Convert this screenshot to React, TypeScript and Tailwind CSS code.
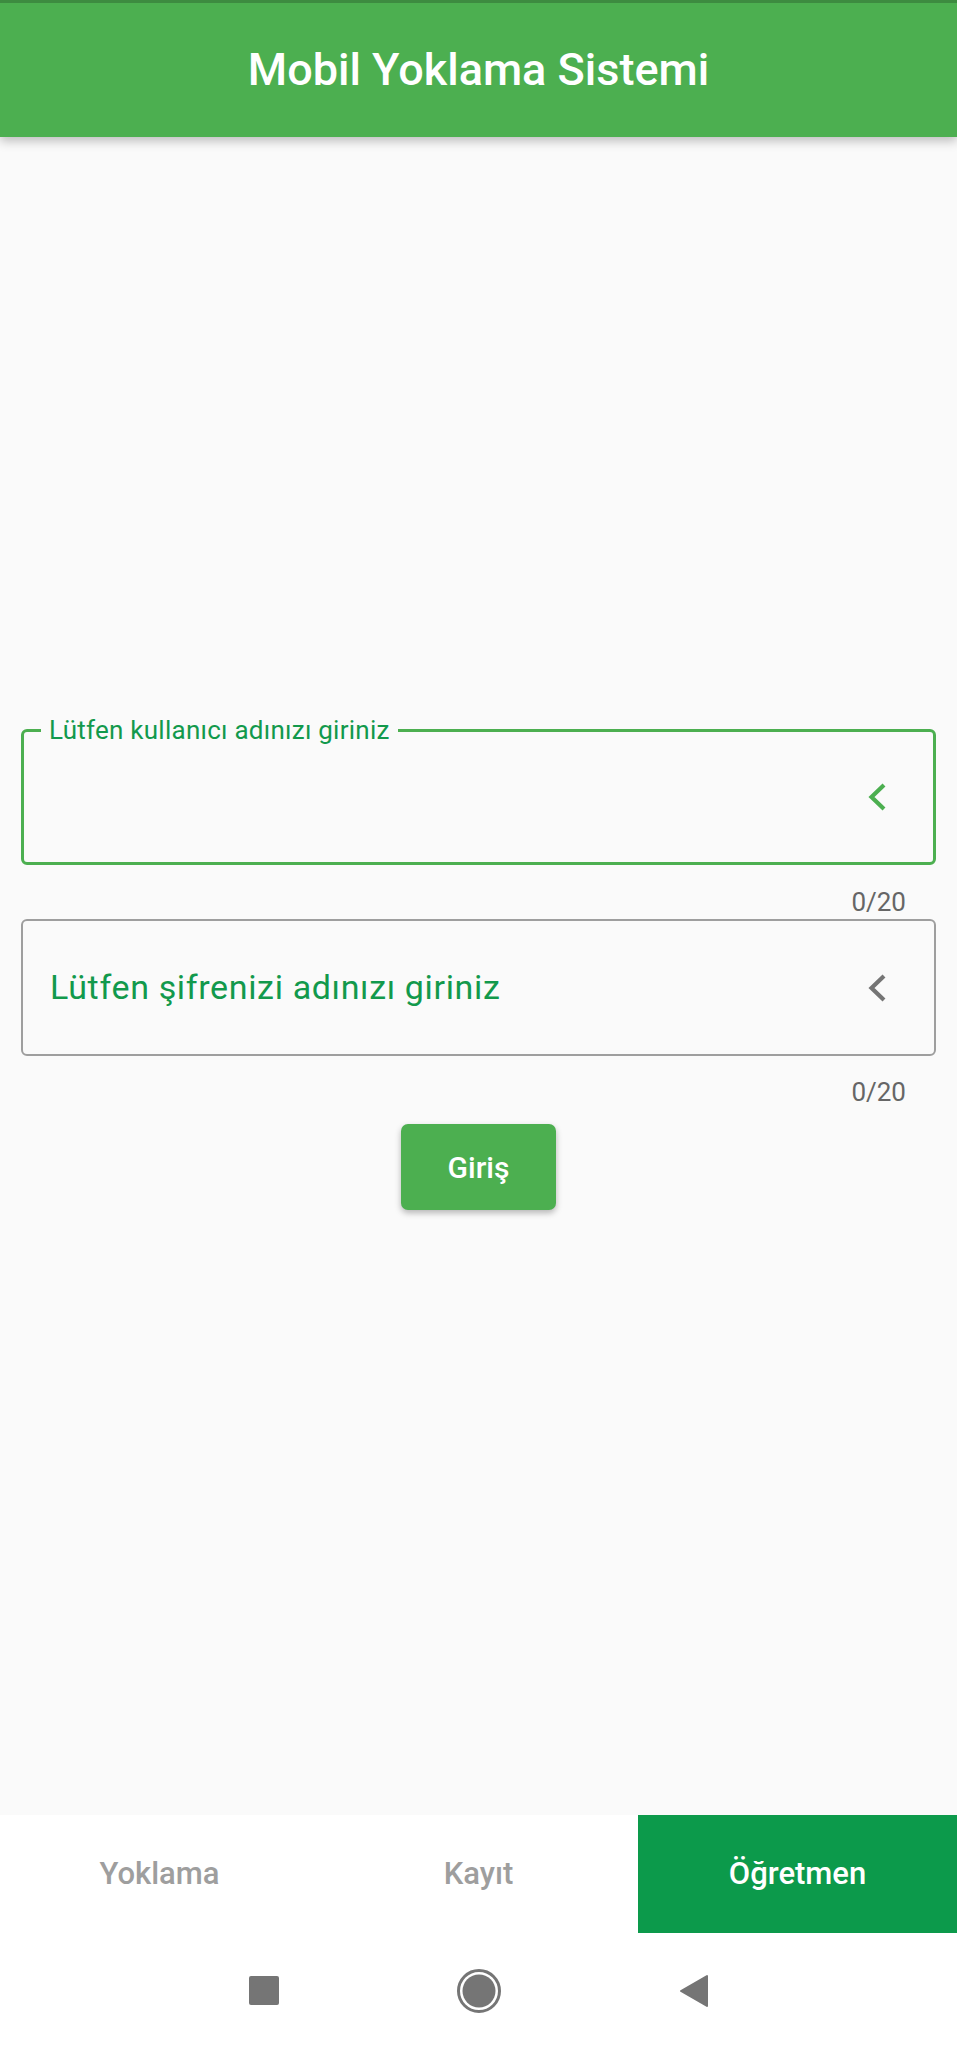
import { useState } from 'react';

function Chevron({ color }: { color: string }) {
  return (
    <svg width="20" height="28" viewBox="0 0 20 28" className="shrink-0">
      <polyline points="17,2 4.5,14 17,26" fill="none" stroke={color} strokeWidth="4.2" strokeLinejoin="miter" />
    </svg>
  );
}

function Field({ label, focused }: { label: string; focused: boolean }) {
  if (focused) {
    return (
      <div className="relative h-[136px] rounded-[6px] border-[3px] border-[#4caf50] flex items-center justify-end pr-[46px]">
        <span className="absolute left-[17px] -top-[17px] px-[8px] bg-[#fafafa] text-[26px] leading-[30px] tracking-[0.25px] text-[#12994c]">
          {label}
        </span>
        <Chevron color="#4caf50" />
      </div>
    );
  }
  return (
    <div className="h-[137px] rounded-[6px] border-2 border-[#9e9e9e] flex items-center justify-between pl-[27px] pr-[47px]">
      <span className="text-[34px] tracking-[0.65px] text-[#12994c]">{label}</span>
      <Chevron color="#757575" />
    </div>
  );
}

export default function App() {
  const [tab, setTab] = useState(2);
  const tabs = ['Yoklama', 'Kayıt', 'Öğretmen'];

  return (
    <div className="h-[2048px] flex flex-col bg-[#fafafa] font-['Roboto',sans-serif]">
      <header className="relative z-10 h-[137px] shrink-0 bg-[#4caf50] border-t-[3px] border-[#3d8b40] shadow-[0_4px_10px_rgba(0,0,0,0.25)] flex items-center justify-center">
        <h1 className="text-white text-[45px] font-medium">Mobil Yoklama Sistemi</h1>
      </header>

      <main className="flex-1 flex flex-col px-[21px] pt-[592px]">
        <Field label="Lütfen kullanıcı adınızı giriniz" focused />
        <div className="mt-[23px] pr-[30px] text-right text-[26px] leading-[28px] text-[#666666]">0/20</div>
        <div className="mt-[3px]">
          <Field label="Lütfen şifrenizi adınızı giriniz" focused={false} />
        </div>
        <div className="mt-[22px] pr-[30px] text-right text-[26px] leading-[28px] text-[#666666]">0/20</div>
        <button className="mt-[18px] self-center w-[155px] h-[86px] rounded-[7px] bg-[#4caf50] text-white text-[30px] font-medium shadow-[0_3px_6px_rgba(0,0,0,0.28)]">
          Giriş
        </button>
      </main>

      <nav className="h-[118px] shrink-0 grid grid-cols-3 bg-white">
        {tabs.map((t, i) => (
          <button
            key={t}
            onClick={() => setTab(i)}
            className={
              i === tab
                ? 'flex items-center justify-center bg-[#0c9a4b] text-white text-[31px] font-medium'
                : 'flex items-center justify-center text-[#9e9e9e] text-[31px] font-medium'
            }
          >
            {t}
          </button>
        ))}
      </nav>

      <div className="h-[115px] shrink-0 bg-white flex items-center justify-center">
        <div className="w-[215px] flex justify-center">
          <div className="w-[30px] h-[29px] rounded-[2px] bg-[#757575]" />
        </div>
        <div className="w-[215px] flex justify-center">
          <svg width="46" height="46" viewBox="0 0 46 46">
            <circle cx="23" cy="23" r="20.5" fill="none" stroke="#757575" strokeWidth="3" />
            <circle cx="23" cy="23" r="16.5" fill="#757575" />
          </svg>
        </div>
        <div className="w-[215px] flex justify-center">
          <svg width="30" height="34" viewBox="0 0 30 34">
            <polygon points="28,2 28,32 2,17" fill="#757575" stroke="#757575" strokeWidth="2" strokeLinejoin="round" />
          </svg>
        </div>
      </div>
    </div>
  );
}
